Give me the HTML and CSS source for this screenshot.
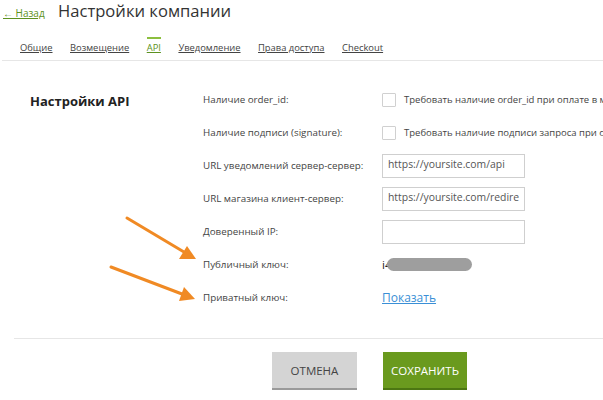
FILE: index.html
```html
<!DOCTYPE html>
<html lang="ru">
<head>
    <meta charset="UTF-8">
    <meta name="viewport" content="width=device-width, initial-scale=1.0">
    <title>Настройки компании</title>
    <link rel="stylesheet" href="styles.css">
</head>
<body>
    <div class="page">
        <div class="top">
            <a class="back" href="#">&larr; Назад</a>
            <h1 class="title">Настройки компании</h1>
        </div>

        <nav class="tabs">
            <a class="tab" href="#">Общие</a>
            <a class="tab" href="#">Возмещение</a>
            <a class="tab active" href="#">API</a>
            <a class="tab" href="#">Уведомление</a>
            <a class="tab" href="#">Права доступа</a>
            <a class="tab" href="#">Checkout</a>
        </nav>

        <section class="settings">
            <h2 class="settings-title">Настройки API</h2>
            <div class="form">
                <div class="row">
                    <span class="label">Наличие order_id:</span>
                    <label class="check"><span class="box"></span>Требовать наличие order_id при оплате в магазине</label>
                </div>
                <div class="row">
                    <span class="label">Наличие подписи (signature):</span>
                    <label class="check"><span class="box"></span>Требовать наличие подписи запроса при оплате</label>
                </div>
                <div class="row">
                    <span class="label">URL уведомлений сервер-сервер:</span>
                    <input class="field" type="text" value="https://yoursite.com/api">
                </div>
                <div class="row">
                    <span class="label">URL магазина клиент-сервер:</span>
                    <input class="field" type="text" value="https://yoursite.com/redirect">
                </div>
                <div class="row">
                    <span class="label">Доверенный IP:</span>
                    <input class="field" type="text" value="">
                </div>
                <div class="row">
                    <span class="label">Публичный ключ:</span>
                    <span class="key">i4<span class="blur"></span></span>
                </div>
                <div class="row">
                    <span class="label">Приватный ключ:</span>
                    <a class="show" href="#">Показать</a>
                </div>
            </div>
        </section>

        <div class="actions">
            <button class="btn cancel" type="button">Отмена</button>
            <button class="btn save" type="button">Сохранить</button>
        </div>

        <!-- annotation arrows -->
        <svg class="arrows" width="603" height="400" viewBox="0 0 603 400">
            <g stroke="#f08a24" stroke-width="3" stroke-linecap="round" fill="none">
                <line x1="127" y1="218" x2="184" y2="252"/>
                <line x1="111" y1="267" x2="182" y2="294"/>
            </g>
            <g fill="#f08a24">
                <polygon points="196,259 179,259 187,246"/>
                <polygon points="195,299 179,301 184,287"/>
            </g>
        </svg>
    </div>
</body>
</html>
```

FILE: styles.css
```css
body {
    margin: 0;
    font-family: "Open Sans", "Liberation Sans", sans-serif;
    color: #444;
    background: #fff;
    overflow: hidden;
}

.page {
    position: relative;
    width: 603px;
    height: 400px;
    overflow: hidden;
}

/* header */
.top {
    display: flex;
    align-items: baseline;
    height: 23px;
    padding-left: 3px;
}

.back {
    font-size: 10px;
    color: #5d9120;
    width: 55px;
}

.title {
    margin: 0;
    font-size: 16.6px;
    font-weight: normal;
    color: #333;
    line-height: 22px;
}

/* tabs */
.tabs {
    display: flex;
    box-sizing: border-box;
    height: 24px;
    margin: 14px 0 0 2px;
    padding-left: 18px;
    border-bottom: 1px solid #e6e6e6;
}

.tab {
    align-self: flex-start;
    margin-right: 17.5px;
    padding-top: 3px;
    border-top: 2px solid transparent;
    font-size: 9.4px;
    line-height: 12px;
    color: #444;
}

.tab.active {
    color: #5d9120;
    border-top-color: #8cbf3f;
}

/* settings */
.settings {
    display: flex;
    margin-left: 14px;
    padding: 22px 0 24px 16px;
    border-bottom: 1px solid #e6e6e6;
}

.settings-title {
    flex: none;
    width: 173px;
    margin: 9px 0 0;
    font-size: 13px;
    font-weight: bold;
    color: #222;
}

.form {
    display: flex;
    flex-direction: column;
}

.row {
    display: flex;
    align-items: center;
    height: 33px;
    white-space: nowrap;
}

.label {
    flex: none;
    width: 179px;
    font-size: 9.8px;
    color: #444;
}

.check {
    display: flex;
    align-items: center;
    font-size: 9.5px;
    color: #444;
}

.box {
    flex: none;
    width: 12px;
    height: 12px;
    margin-right: 8px;
    border: 1px solid #d0d0d0;
    border-radius: 1px;
}

.field {
    box-sizing: border-box;
    width: 143px;
    height: 24px;
    margin: 0;
    padding: 0 5px 4px;
    border: 1px solid #cfcfcf;
    font-family: "Open Sans", "Liberation Sans", sans-serif;
    font-size: 10.4px;
    color: #555;
}

.key {
    display: flex;
    align-items: center;
    font-size: 11.5px;
    color: #222;
}

.blur {
    display: inline-block;
    width: 85px;
    height: 13px;
    margin-left: -4px;
    border-radius: 7px;
    background: #9e9e9e;
}

.show {
    font-size: 12px;
    color: #3a8fd6;
}

/* buttons */
.actions {
    display: flex;
    gap: 26px;
    padding: 13px 0 0 272px;
}

.btn {
    box-sizing: border-box;
    height: 38px;
    padding: 0;
    border: 0;
    border-bottom: 2px solid;
    font-family: "Open Sans", "Liberation Sans", sans-serif;
    font-size: 11.5px;
    text-transform: uppercase;
}

.cancel {
    width: 85px;
    background: #d4d4d4;
    border-bottom-color: #9a9a9a;
    color: #444;
}

.save {
    width: 84px;
    background: #6a9a1e;
    border-bottom-color: #4c7612;
    color: #fff;
}

.arrows {
    position: absolute;
    left: 0;
    top: 0;
    pointer-events: none;
}
```
